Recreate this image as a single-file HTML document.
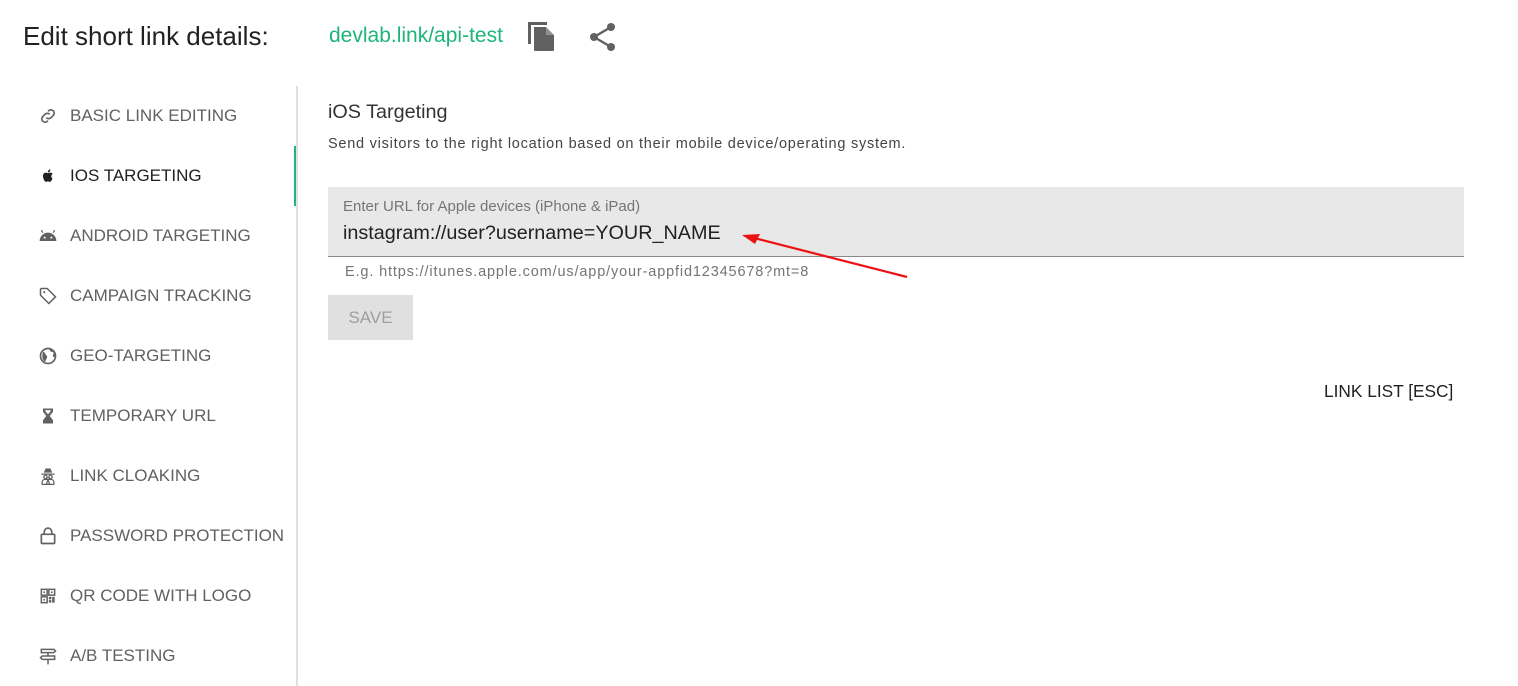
<!DOCTYPE html>
<html><head><meta charset="utf-8"><style>
body{margin:0;width:1518px;height:686px;background:#fff;font-family:"Liberation Sans",sans-serif;position:relative;overflow:hidden}
.a{position:absolute;white-space:nowrap}
.nav{position:absolute;left:38px;font-size:17px;color:#616161;display:flex;align-items:center;height:24px}
.nav svg{width:20px;height:20px;margin-right:12px;fill:#616161}
</style></head><body>
<div class="a" style="left:23px;top:21px;font-size:26px;color:#212121">Edit short link details:</div>
<div class="a" style="left:329px;top:24px;font-size:21px;color:#1db57a">devlab.link/api-test</div>
<svg class="a" style="left:527px;top:20px" width="30" height="32" viewBox="0 0 30 32"><path d="M1 2h19v3H4v19H1z" fill="#616161"/><path d="M7 7h12l8 8v15a1 1 0 0 1-1 1H8a1 1 0 0 1-1-1z" fill="#616161"/><path d="M19 7v8h8" fill="#fff" opacity=".3"/></svg>
<svg class="a" style="left:588px;top:22px" width="28" height="30" viewBox="0 0 28 30"><g fill="#616161"><circle cx="23" cy="5" r="4"/><circle cx="6" cy="15" r="4"/><circle cx="23" cy="25" r="4"/></g><path d="M23 5L6 15L23 25" stroke="#616161" stroke-width="2.4" fill="none"/></svg>
<div class="a" style="left:296px;top:86px;width:2px;height:600px;background:#e0e0e0"></div>
<div class="a" style="left:294px;top:146px;width:2px;height:60px;background:#1db57a"></div>

<div class="nav" style="top:104px"><svg viewBox="0 0 24 24"><path d="M10 14a4 4 0 0 0 5.6 0l3-3a4 4 0 0 0-5.6-5.6l-1 1M14 10a4 4 0 0 0-5.6 0l-3 3a4 4 0 0 0 5.6 5.6l1-1" stroke="#616161" stroke-width="2" fill="none"/></svg>BASIC LINK EDITING</div>
<div class="nav" style="top:164px;color:#212121"><svg viewBox="0 0 24 24" style="fill:#212121"><path d="M16 12.5c0-2 1.6-3 1.7-3-1-1.4-2.4-1.6-2.9-1.6-1.2-.1-2.4.7-3 .7s-1.600-.7-2.600-.7C7.8 8 6 9.2 6 12c0 3 2 7 3.6 7 .8 0 1.2-.6 2.3-.6s1.3.6 2.3.6c1.6 0 2.8-3 3.2-4-.1 0-1.4-.7-1.4-2.5zM14 6.6c.6-.7 1-1.6.9-2.6-.8 0-1.8.6-2.3 1.2-.5.6-1 1.5-.8 2.4.9.1 1.7-.4 2.2-1z"/></svg>IOS TARGETING</div>
<div class="nav" style="top:224px"><svg viewBox="0 0 24 24"><path d="M2 18a10 10 0 0 1 20 0z"/><path d="M6 8l-2-3M18 8l2-3" stroke="#616161" stroke-width="1.5"/><circle cx="8" cy="14" r="1.2" fill="#fff"/><circle cx="16" cy="14" r="1.2" fill="#fff"/></svg>ANDROID TARGETING</div>
<div class="nav" style="top:284px"><svg viewBox="0 0 24 24"><path d="M3 4v7l10 10 8-8L11 3H4z" stroke="#616161" stroke-width="1.8" fill="none"/><circle cx="7.5" cy="7.5" r="1.3"/></svg>CAMPAIGN TRACKING</div>
<div class="nav" style="top:344px"><svg viewBox="0 0 24 24"><circle cx="12" cy="12" r="9" stroke="#616161" stroke-width="2" fill="none"/><path d="M6 7c2 0 3 2 3 3s2 1 2 3-2 3-2 6C6 18 4 14 6 7zM14 4c0 2 1 3 3 3s2 2 1 4 2 3 3 2c0-4-3-8-7-9z"/></svg>GEO-TARGETING</div>
<div class="nav" style="top:404px"><svg viewBox="0 0 24 24"><path d="M6 3h12v4l-4 5 4 5v4H6v-4l4-5-4-5z"/><path d="M9 5h6v1.5l-3 3.5-3-3.5z" fill="#fff"/></svg>TEMPORARY URL</div>
<div class="nav" style="top:464px"><svg viewBox="0 0 24 24"><path d="M7 8l2-5h6l2 5zM4 9h16v1.5H4z"/><circle cx="9" cy="13" r="2" stroke="#616161" stroke-width="1.5" fill="none"/><circle cx="15" cy="13" r="2" stroke="#616161" stroke-width="1.5" fill="none"/><path d="M5 22v-3c0-2 2-3 4-3h6c2 0 4 1 4 3v3zM12 16l-2 6h4z" stroke="#616161" stroke-width="1.5" fill="none"/></svg>LINK CLOAKING</div>
<div class="nav" style="top:524px"><svg viewBox="0 0 24 24"><rect x="4" y="10" width="16" height="11" rx="1" stroke="#616161" stroke-width="2" fill="none"/><path d="M7.5 10V7a4.5 4.5 0 0 1 9 0v3" stroke="#616161" stroke-width="2" fill="none"/></svg>PASSWORD PROTECTION</div>
<div class="nav" style="top:584px"><svg viewBox="0 0 24 24"><g stroke="#616161" stroke-width="1.8" fill="none"><rect x="4" y="4" width="7" height="7"/><rect x="13" y="4" width="7" height="7"/><rect x="4" y="13" width="7" height="7"/></g><rect x="6.5" y="6.5" width="2" height="2"/><rect x="15.5" y="6.5" width="2" height="2"/><rect x="6.5" y="15.5" width="2" height="2"/><path d="M13 13h3v3h-3zM17 13h3v7h-3zM13 17h3v3h-3z"/></svg>QR CODE WITH LOGO</div>
<div class="nav" style="top:644px"><svg viewBox="0 0 24 24"><g stroke="#616161" stroke-width="1.8" fill="none"><path d="M4 4h15l2 2-2 2H4zM20 12H5l-2 2 2 2h15zM12 8v4M12 16v6"/></g></svg>A/B TESTING</div>

<div class="a" style="left:328px;top:101px;font-size:19.8px;color:#333">iOS Targeting</div>
<div class="a" style="left:328px;top:136px;font-size:14.5px;color:#444;letter-spacing:.75px">Send visitors to the right location based on their mobile device/operating system.</div>
<div class="a" style="left:328px;top:187px;width:1136px;height:69px;background:#e8e8e8;border-bottom:1px solid #8a8a8a"></div>
<div class="a" style="left:343px;top:198px;font-size:15px;color:#757575">Enter URL for Apple devices (iPhone &amp; iPad)</div>
<div class="a" style="left:343px;top:222px;font-size:19.8px;color:#212121">instagram://user?username=YOUR_NAME</div>
<div class="a" style="left:345px;top:264px;font-size:14.5px;color:#757575;letter-spacing:.85px">E.g. https://itunes.apple.com/us/app/your-appfid12345678?mt=8</div>
<div class="a" style="left:328px;top:295px;width:85px;height:45px;background:#e0e0e0;color:#9e9e9e;font-size:17px;line-height:45px;text-align:center">SAVE</div>
<svg class="a" style="left:740px;top:228px" width="172" height="54" viewBox="0 0 172 54"><path d="M167 49L14 10" stroke="#ee1111" stroke-width="2.2"/><path d="M2 7l18-1-5 10z" fill="#ee1111"/></svg>
<div class="a" style="left:1324px;top:381px;font-size:17.3px;color:#212121">LINK LIST [ESC]</div>
</body></html>
